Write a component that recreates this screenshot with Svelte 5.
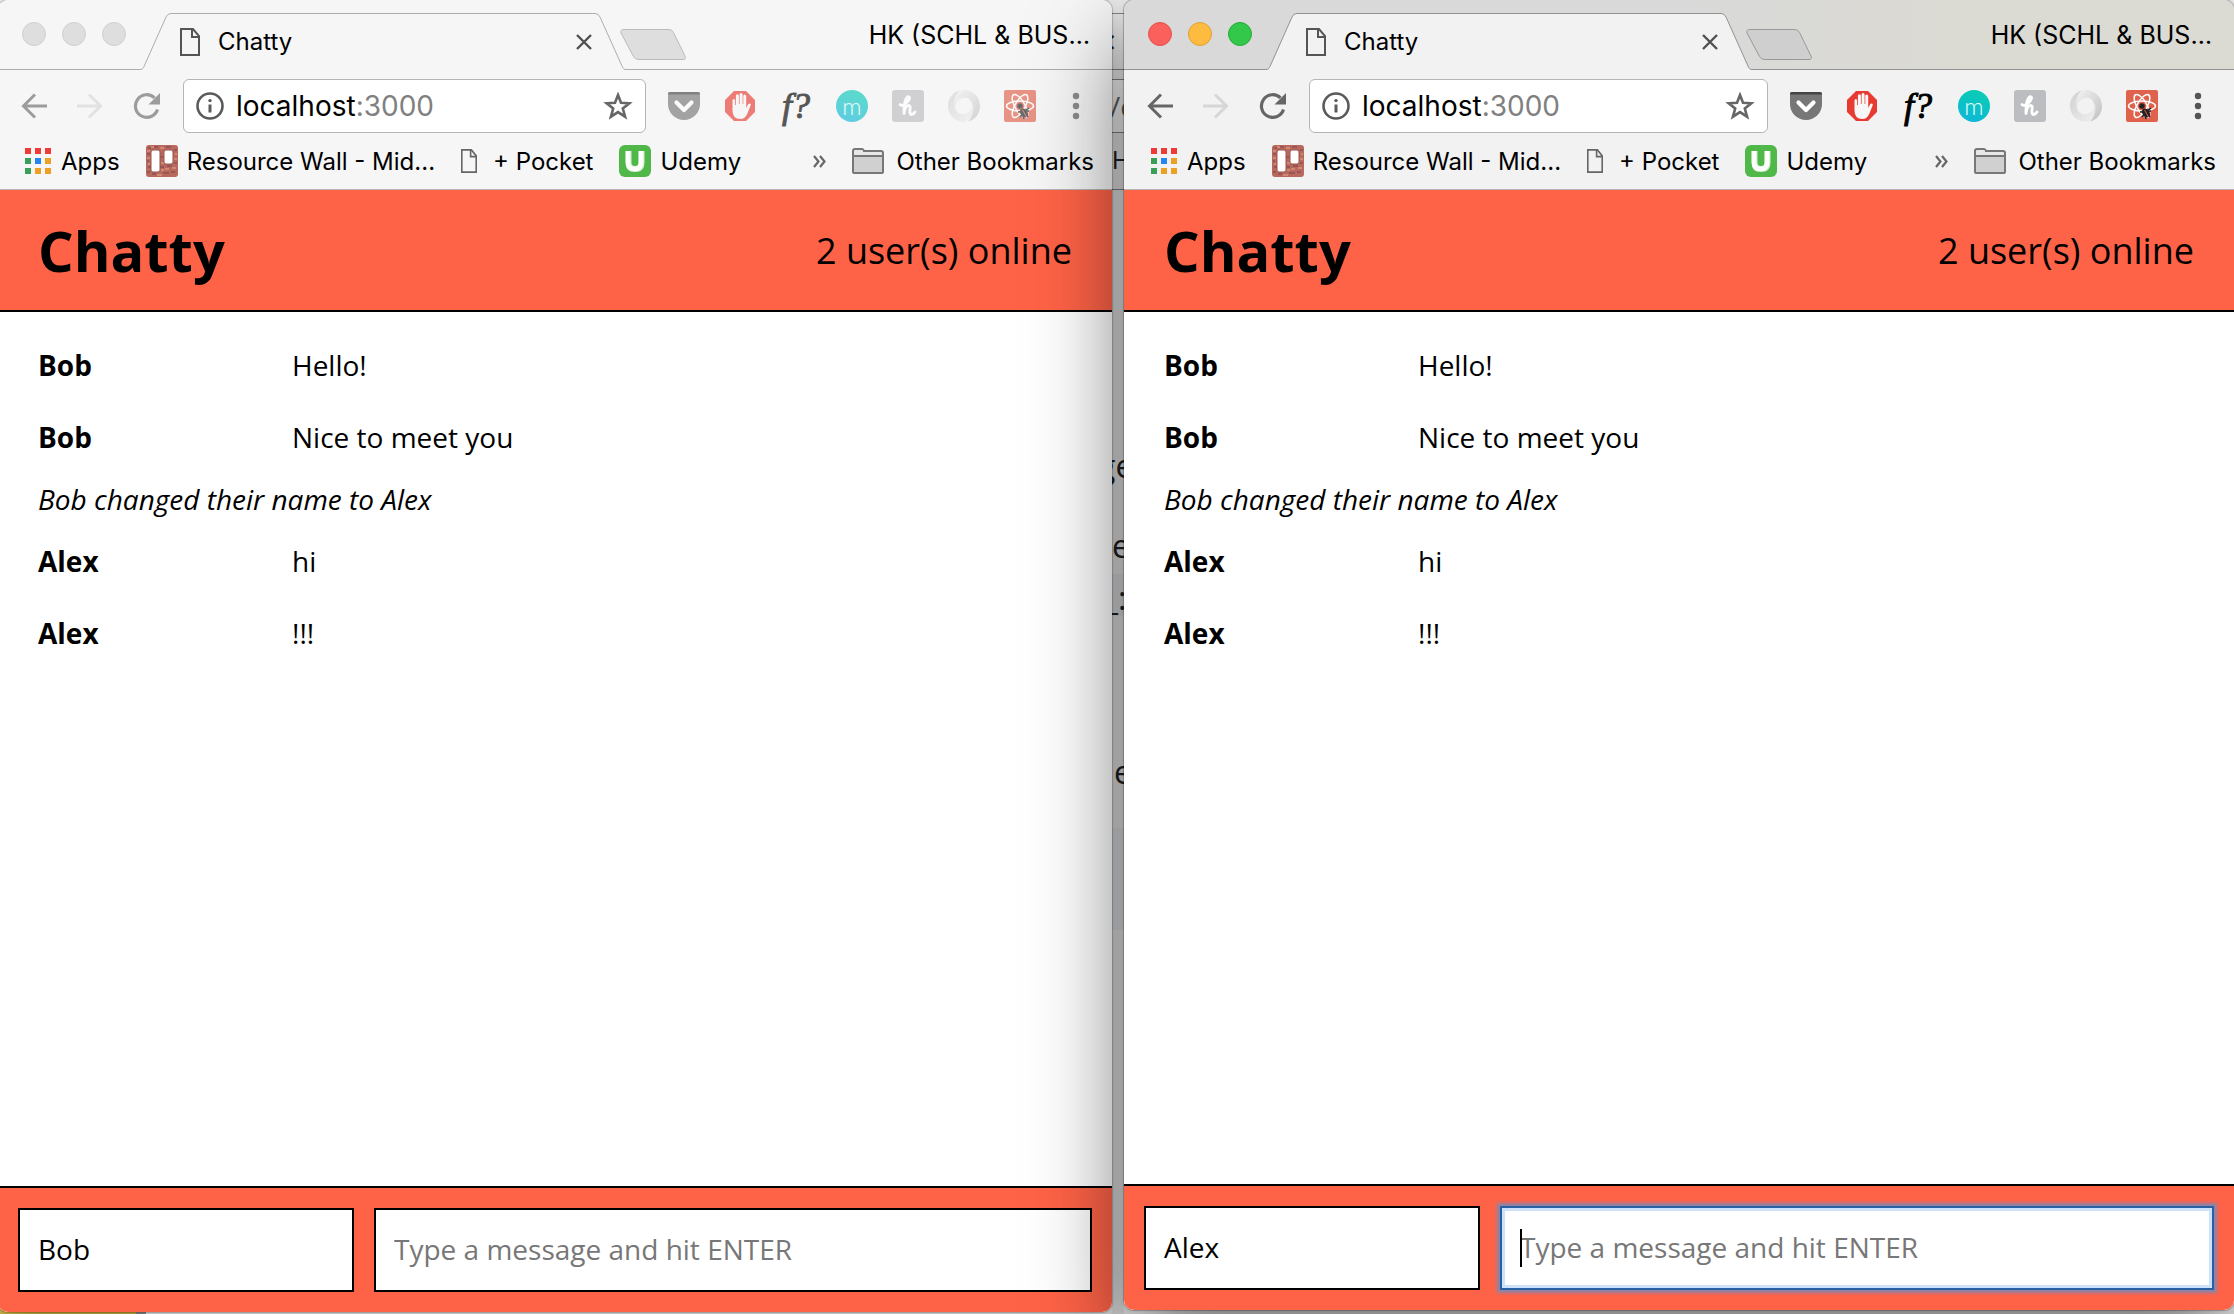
<script>
  const messages = [
    { name: 'Bob', text: 'Hello!' },
    { name: 'Bob', text: 'Nice to meet you' },
    { notice: 'Bob changed their name to Alex' },
    { name: 'Alex', text: 'hi' },
    { name: 'Alex', text: '!!!' }
  ];

  const windows = [
    { id: 'back', active: false, user: 'Bob' },
    { id: 'front', active: true, user: 'Alex' }
  ];
</script>

{#snippet pageIcon(w, h)}
  <svg width={w} height={h} viewBox="0 0 20 28" preserveAspectRatio="none" fill="none" stroke="currentColor" stroke-width="2">
    <path d="M1 1h12l6 7v19H1z" />
    <path d="M12 1v8h7" />
  </svg>
{/snippet}

{#snippet browser(win)}
  <section class="window {win.id}" aria-label="Chatty, {win.user}">
    <div class="strip">
      <div class="lights">
        <button class="light red" aria-label="Close window"></button>
        <button class="light yellow" aria-label="Minimise window"></button>
        <button class="light green" aria-label="Zoom window"></button>
      </div>
      <div class="tab">
        <svg class="tab-shape" width="488" height="57" viewBox="0 0 488 57" aria-hidden="true">
          <path class="tab-fill" d="M0 56.5c2 0 3-1 4-3L26 4q1.500-3.500 5-3.500H455q3.500 0 5 3.500l22 49c1 2.500 2 3.500 4 3.500V57H0z" />
          <path class="tab-line" d="M0 56.500c2 0 3-1 4-3L26 4q1.500-3.500 5-3.500H455q3.500 0 5 3.500l22 49c1 2.500 2 3.500 4 3.500" />
        </svg>
        <span class="tab-icon">{@render pageIcon(20, 28)}</span>
        <span class="tab-title">Chatty</span>
        <button class="tab-close" aria-label="Close tab">
          <svg width="16" height="16" viewBox="0 0 16 16" stroke="#505050" stroke-width="2.400"><path d="M1 1l14 14M15 1L1 15" /></svg>
        </button>
      </div>
      <button class="new-tab" aria-label="New tab">
        <svg width="66" height="33" viewBox="0 0 66 33">
          <path d="M4 .500H49q3 0 4.500 3L65 27q1.500 3.500-2 3.500H19q-4 0-5.500-3L1 4Q0 .500 4 .500z" />
        </svg>
      </button>
      <span class="profile">HK (SCHL &amp; BUS…</span>
    </div>

    <div class="toolbar">
      <div class="nav">
        <button class="nav-back" aria-label="Back">
          <svg width="26" height="26" viewBox="0 0 26 26" fill="none" stroke="currentColor" stroke-width="3"><path d="M26 13H2.500M14 1.500L2.500 13 14 24.500" /></svg>
        </button>
        <button class="nav-forward" aria-label="Forward">
          <svg width="26" height="26" viewBox="0 0 26 26" fill="none" stroke="currentColor" stroke-width="3"><path d="M0 13h23.500M12 1.500L23.500 13 12 24.500" /></svg>
        </button>
        <button class="nav-reload" aria-label="Reload">
          <svg width="28" height="28" viewBox="0 0 28 28"><path d="M24.500 17.500A11.300 11.300 0 1 1 21.500 5.800" fill="none" stroke="currentColor" stroke-width="3.200" /><path d="M27 1v11.500H15.500z" fill="currentColor" /></svg>
        </button>
      </div>
      <div class="omnibox">
        <svg width="28" height="28" viewBox="0 0 28 28" aria-hidden="true"><circle cx="14" cy="14" r="12.500" fill="none" stroke="#5a5a5a" stroke-width="2.600" /><path d="M14 12.500v8" stroke="#5a5a5a" stroke-width="3" /><circle cx="14" cy="8.600" r="1.700" fill="#5a5a5a" /></svg>
        <a class="url" href="#chat">localhost<span>:3000</span></a>
        <button class="star" aria-label="Bookmark this page">
          <svg width="30" height="30" viewBox="0 0 30 30" fill="none" stroke="#666" stroke-width="2.600"><path d="M15 4l3 7.800 8.300.500-6.500 5.200 2.300 8.200-7.100-4.600-7.100 4.600 2.300-8.200-6.500-5.200 8.300-.500z" /></svg>
        </button>
      </div>
      <div class="extensions">
        <button aria-label="Save to Pocket">
          <svg width="32" height="32" viewBox="0 0 32 32"><path d="M0 4q0-2 2-2h28q2 0 2 2v10a16 16 0 0 1-32 0z" fill="#777" /><path d="M0 4q0-2 2-2h28q2 0 2 2v.500H0z" fill="#444" /><path d="M8.500 12.500l7.500 7.500 7.500-7.500" fill="none" stroke="#fff" stroke-width="4.200" stroke-linecap="round" stroke-linejoin="round" /></svg>
        </button>
        <button aria-label="Content blocker">
          <svg width="32" height="32" viewBox="0 0 32 32"><path d="M10 1h12l9 9v12l-9 9H10l-9-9V10z" fill="#e93a32" /><path d="M8.500 10.500q0-1.500 1.300-1.500t1.300 1.500V15h.8V5.800q0-1.500 1.500-1.500t1.500 1.500V14h.7V4.600q0-1.600 1.500-1.600t1.500 1.600V14h.7V6q0-1.500 1.400-1.500T22.200 6v12l1.800-3.500q1.200-1.600 2.600-.6.500.5 0 1.600l-3.400 8.500Q21 29 16.500 29 8.500 29 8.500 20.500z" fill="#f7f7f7" /></svg>
        </button>
        <button class="ext-font" aria-label="WhatFont"><i>f?</i></button>
        <button class="ext-m" aria-label="Momentum">m</button>
        <button aria-label="Honey">
          <svg width="32" height="32" viewBox="0 0 32 32"><rect width="32" height="32" rx="3" fill="#bcbdc0" /><path d="M8 14.500q2 2 5-.500 5-4 4.500-6.500-1-2-3 .500-3 5-2.500 15.500 1-7 4-8 3-.500 2 4-.500 5 1.500 5 2 0 3.500-2.500" fill="none" stroke="#fff" stroke-width="2.800" stroke-linecap="round" stroke-linejoin="round" /></svg>
        </button>
        <button aria-label="JSON viewer">
          <svg width="32" height="32" viewBox="0 0 32 32">
            <defs>
              <linearGradient id="ring-a-{win.id}" x1="0" y1="0" x2="1" y2="1"><stop offset="0" stop-color="#f2f2f2" /><stop offset="1" stop-color="#c0c0c0" /></linearGradient>
              <linearGradient id="ring-b-{win.id}" x1="1" y1="1" x2="0" y2="0"><stop offset="0" stop-color="#f0f0f0" /><stop offset="1" stop-color="#d0d0d0" /></linearGradient>
            </defs>
            <path d="M15 0c10 0 17 7 17 16 0 8-5 14-12 15.500C27 26 27 6 15.500 8 12 8.500 7 11 7 19 5 10 9 3 15 0z" fill="url(#ring-a-{win.id})" />
            <path d="M17 32C7 32 0 25 0 16 0 8 5 2 12 .5 3 8 5 26 16.500 24c4-.5 8-4 8.500-11C27 22 23 29 17 32z" fill="url(#ring-b-{win.id})" />
          </svg>
        </button>
        <button aria-label="React developer tools">
          <svg width="32" height="32" viewBox="0 0 32 32"><rect width="32" height="32" rx="2" fill="#e0614c" /><g fill="none" stroke="#fff" stroke-width="1.500"><ellipse cx="16" cy="16" rx="13.500" ry="5" /><ellipse cx="16" cy="16" rx="13" ry="5" transform="rotate(60 16 16)" /><ellipse cx="16" cy="16" rx="13" ry="5" transform="rotate(120 16 16)" /></g><circle cx="16" cy="16" r="2.800" fill="#222" /><ellipse cx="20" cy="23" rx="3.600" ry="5" transform="rotate(-35 20 23)" fill="#222" /><path d="M14 22l11-1M16 27l7-8M20 29l-2-9M25 18l-5 4M24 27l-4-5" stroke="#222" stroke-width="1.500" /><path d="M18.500 20l4 7" stroke="#e0614c" stroke-width="1" /></svg>
        </button>
        <button aria-label="Menu">
          <svg width="32" height="32" viewBox="0 0 32 32" fill="#555"><circle cx="16" cy="6" r="3.200" /><circle cx="16" cy="16" r="3.200" /><circle cx="16" cy="26" r="3.200" /></svg>
        </button>
      </div>
    </div>

    <nav class="bookmarks" aria-label="Bookmarks">
      <a href="#apps" class="apps">
        <svg width="26" height="26" viewBox="0 0 26 26"><path d="M0 0h6v6H0zM10 0h6v6h-6zM20 0h6v6h-6z" fill="#f03a36" /><path d="M0 10h6v6H0zM0 20h6v6H0z" fill="#3a9f58" /><path d="M10 10h6v6h-6z" fill="#2486f0" /><path d="M20 10h6v6h-6zM10 20h6v6h-6zM20 20h6v6h-6z" fill="#eea022" /></svg>
        Apps
      </a>
      <a href="#resource-wall">
        <svg width="32" height="32" viewBox="0 0 32 32"><rect width="32" height="32" rx="3" fill="#b9695b" /><path d="M2 3h3M8 2h4M20 2h5M28 5h3M1 9h3M1 16h2M2 22h3M14 22h4M21 21h5M28 18h3M17 28h6M6 29h4M25 27h4M14 12h3M1 27h3" stroke="#8b4f55" stroke-width="1.500" /><path d="M5 2h3M14 3h4M1 6h3M29 9h2M1 13h3M28 14h3M15 18h3M19 24h4M26 23h4M11 30h5M15 25h3M2 19h2" stroke="#d99480" stroke-width="1.500" /><rect x="5" y="5" width="9" height="22" rx="2" fill="#fff" stroke="#95544f" /><rect x="18" y="5" width="9" height="14" rx="2" fill="#fff" stroke="#95544f" /></svg>
        Resource Wall - Mid...
      </a>
      <a href="#pocket" class="page-link">{@render pageIcon(16, 24)} + Pocket</a>
      <a href="#udemy">
        <svg width="32" height="32" viewBox="0 0 32 32"><rect width="32" height="32" rx="6" fill="#50b848" /><path d="M9.500 6v11.500q0 6.500 6.500 6.500t6.500-6.500V6" fill="none" stroke="#d5f0d2" stroke-width="6" /><path d="M9 6v11.500q0 6.500 6.500 6.500T22 17.500V6" fill="none" stroke="#fff" stroke-width="4.500" /></svg>
        Udemy
      </a>
      <button class="more" aria-label="More bookmarks">
        <svg width="13" height="13" viewBox="0 0 13 13" fill="none" stroke="#666" stroke-width="2.200"><path d="M1 1l4.500 5.500L1 12M7 1l4.500 5.500L7 12" /></svg>
      </button>
      <a href="#other" class="other">
        <svg width="32" height="26" viewBox="0 0 32 26"><path d="M1 24V3q0-2 2-2h7q1.500 0 2 2h17q2 0 2 2v19q0 1-1 1H2q-1 0-1-1z" fill="#e8e8e8" stroke="#777" stroke-width="2" /><path d="M2 9h28v15H2z" fill="#d0d0d0" /><path d="M1 8h30" stroke="#777" stroke-width="2" /></svg>
        Other Bookmarks
      </a>
    </nav>

    <div class="app">
      <header>
        <h1>Chatty</h1>
        <span>2 user(s) online</span>
      </header>
      <main>
        {#each messages as message}
          {#if message.notice}
            <p class="notice">{message.notice}</p>
          {:else}
            <p class="message"><b>{message.name}</b><span>{message.text}</span></p>
          {/if}
        {/each}
      </main>
      <footer>
        <input class="username" aria-label="Your name" value={win.user} />
        <div class="compose" class:focused={win.active}>
          <input aria-label="Message" placeholder="Type a message and hit ENTER" />
          {#if win.active}<span class="caret"></span>{/if}
        </div>
      </footer>
    </div>
  </section>
{/snippet}

<div class="desktop">
  {@render browser(windows[0])}
  <div class="behind" aria-hidden="true">
    <div class="rear-tabs"></div>
    <div class="rear-toolbar"></div>
    <div class="rear-marks"></div>
    <span class="frag close">×</span>
    <span class="frag path">/c</span>
    <span class="frag mark">H</span>
    <span class="frag word-one">ge</span>
    <span class="frag word-two">e</span>
    <span class="frag code">_:</span>
    <span class="frag word-three">e</span>
    <div class="frag block"></div>
  </div>
  {@render browser(windows[1])}
</div>

<style>
  :global(body) {
    margin: 0;
    background: #fff;
  }

  .desktop {
    display: grid;
    grid-template-columns: minmax(0, 1114fr) 12px minmax(0, 1110fr);
    min-height: 100vh;
    margin-left: -2px;
    overflow: hidden;
    background: linear-gradient(90deg, #d8c04a 138px, #999 138px 148px, #fff 148px) bottom / 100% 12px no-repeat #f2f2f2;
    font-family: Inter, "Liberation Sans", sans-serif;
    font-size: 24px;
    color: #000;
  }

  button {
    display: flex;
    align-items: center;
    justify-content: center;
    margin: 0;
    padding: 0;
    border: 0;
    background: none;
    color: inherit;
    font: inherit;
  }

  a {
    color: inherit;
    text-decoration: none;
  }

  svg {
    display: block;
    flex: none;
  }

  .window {
    position: relative;
    display: flex;
    flex-direction: column;
    min-width: 0;
    border-radius: 10px;
    background: #f2f2f2;
  }

  .back {
    z-index: 1;
    margin-bottom: 2px;
    background: #f6f6f6;
    box-shadow: 0 0 1px 1px rgba(0, 0, 0, 0.2), 0 16px 40px rgba(0, 0, 0, 0.3);
  }

  .front {
    z-index: 2;
    margin-bottom: 4px;
    box-shadow: 0 0 1px 1px rgba(0, 0, 0, 0.25), 0 40px 90px rgba(0, 0, 0, 0.56);
  }

  .strip {
    display: flex;
    height: 69px;
    border-bottom: 1px solid #929292;
    border-radius: 10px 10px 0 0;
    background: linear-gradient(90deg, #d9d9d9 50%, #dbdad3 75%);
  }

  .back .strip {
    border-color: #adadad;
    background: #f6f6f6;
  }

  .lights {
    display: flex;
    flex: none;
    gap: 16px;
    width: 118px;
    padding: 22px 0 0 24px;
  }

  .light {
    box-sizing: border-box;
    width: 24px;
    height: 24px;
    border: 1px solid #d0d0d0;
    border-radius: 50%;
    background: #dedede;
  }

  .front .red {
    border-color: #e2504a;
    background: #fc605c;
  }

  .front .yellow {
    border-color: #dfa036;
    background: #fdbc40;
  }

  .front .green {
    border-color: #25ab36;
    background: #34c84a;
  }

  .tab {
    position: relative;
    display: flex;
    flex: none;
    align-items: center;
    box-sizing: border-box;
    width: 488px;
    height: 57px;
    margin-top: 13px;
    padding: 0 36px 0 40px;
  }

  .tab-shape {
    position: absolute;
    inset: 0;
  }

  .tab-fill {
    fill: #f2f2f2;
  }

  .tab-line {
    fill: none;
    stroke: #929292;
  }

  .back .tab-fill {
    fill: #f6f6f6;
  }

  .back .tab-line {
    stroke: #adadad;
  }

  .tab-icon,
  .tab-title,
  .tab-close {
    position: relative;
  }

  .tab-icon {
    color: #555;
  }

  .tab-title {
    flex: 1;
    padding-left: 18px;
  }

  .new-tab {
    position: relative;
    flex: none;
    align-self: flex-start;
    margin: 29px 0 0 -8px;
  }

  .new-tab path {
    fill: #cfcfcf;
    stroke: #999;
  }

  .back .new-tab path {
    fill: #dedede;
    stroke: #bbb;
  }

  .profile {
    margin-left: auto;
    padding: 20px 22px 0 0;
    font-size: 25px;
    line-height: 30px;
    white-space: nowrap;
  }

  .toolbar {
    display: flex;
    align-items: center;
    gap: 22px;
    padding: 9px 20px 0 23px;
  }

  .nav {
    display: flex;
    align-items: center;
    gap: 30px;
    color: #666;
  }

  .nav-forward {
    color: #d6d6d6;
  }

  .back .nav {
    color: #9c9c9c;
  }

  .back .nav-forward {
    color: #e2e2e2;
  }

  .omnibox {
    display: flex;
    flex: 1;
    align-items: center;
    box-sizing: border-box;
    min-width: 0;
    height: 54px;
    padding: 0 12px;
    border: 1px solid #b5b5b5;
    border-radius: 6px;
    background: #fff;
  }

  .url {
    flex: 1;
    padding-left: 12px;
    font-size: 28px;
  }

  .url span {
    color: #808080;
  }

  .extensions {
    display: flex;
    gap: 24px;
  }

  .extensions button {
    width: 32px;
    height: 32px;
  }

  .back .extensions {
    opacity: 0.65;
  }

  .ext-font {
    font-family: "Liberation Serif", serif;
    font-size: 36px;
    -webkit-text-stroke: 1px currentColor;
  }

  .extensions .ext-m {
    border-radius: 50%;
    background: linear-gradient(20deg, #10b5dc, #08cfae);
    color: #e8ffff;
    font-family: Lato, sans-serif;
    font-size: 24px;
    font-weight: 300;
    line-height: 28px;
  }

  .bookmarks {
    display: flex;
    align-items: center;
    gap: 26px;
    height: 56px;
    padding: 0 18px 0 27px;
    border-bottom: 1px solid #b5b5b5;
    white-space: nowrap;
  }

  .bookmarks a {
    display: flex;
    align-items: center;
    gap: 9px;
  }

  .bookmarks .apps {
    gap: 10px;
  }

  .bookmarks .page-link {
    gap: 16px;
  }

  .bookmarks .other {
    gap: 12px;
  }

  .page-link :global(svg) {
    color: #666;
  }

  .more {
    margin-left: auto;
  }

  .app {
    display: flex;
    flex: 1;
    flex-direction: column;
    border-radius: 0 0 10px 10px;
    background: #fff;
    font-family: "Open Sans", "Noto Sans", sans-serif;
    font-size: 28px;
    line-height: 38px;
  }

  header {
    display: flex;
    align-items: center;
    justify-content: space-between;
    height: 120px;
    padding: 0 40px;
    border-bottom: 2px solid #000;
    background: #ff6347;
    font-size: 36px;
    line-height: 49px;
  }

  h1 {
    margin: 0;
    font-size: 56px;
    line-height: 76px;
  }

  main {
    flex: 1;
    padding: 17px 40px;
  }

  p {
    margin: 0;
  }

  .message {
    display: flex;
    padding: 17px 0;
  }

  .message b {
    flex: none;
    width: 254px;
  }

  .notice {
    padding: 7px 0;
    font-style: italic;
  }

  footer {
    display: flex;
    gap: 20px;
    padding: 20px;
    border-top: 2px solid #000;
    border-radius: 0 0 10px 10px;
    background: #ff6347;
  }

  input {
    box-sizing: border-box;
    width: 100%;
    height: 84px;
    margin: 0;
    padding: 0 18px 2px;
    border: 2px solid #000;
    border-radius: 0;
    outline: 0;
    background: #fff;
    color: #000;
    font: inherit;
  }

  input::placeholder {
    color: #777;
    opacity: 1;
  }

  .username {
    flex: none;
    width: 336px;
  }

  .compose {
    position: relative;
    flex: 1;
  }

  .focused input {
    border-color: #2860a2;
    box-shadow: inset 0 0 0 3px #cce2fa, 0 0 3px 3px rgba(75, 150, 225, 0.65);
  }

  .caret {
    position: absolute;
    top: 23px;
    left: 20px;
    width: 2px;
    height: 38px;
    background: #000;
  }

  .behind {
    position: relative;
    overflow: hidden;
    background: #f2f2f2;
    color: #222;
    font-family: "Open Sans", sans-serif;
    font-size: 32px;
    line-height: 40px;
  }

  .rear-tabs,
  .rear-toolbar,
  .rear-marks {
    box-sizing: border-box;
    border-bottom: 1px solid #888;
  }

  .rear-tabs {
    height: 70px;
    background: linear-gradient(#f2f2f2 13px, #888 13px 14px, #f2f2f2 14px);
  }

  .rear-toolbar {
    height: 63px;
    background: linear-gradient(#f2f2f2 9px, #888 9px 10px, #fff 10px);
  }

  .rear-marks {
    height: 57px;
  }

  .frag {
    position: absolute;
    left: 0;
    white-space: nowrap;
  }

  .close {
    top: 22px;
    left: -14px;
  }

  .path {
    top: 86px;
    left: -2px;
    color: #666;
    font-size: 28px;
  }

  .mark {
    top: 141px;
    font-family: Inter, sans-serif;
    font-size: 24px;
  }

  .word-one {
    top: 446px;
    left: -14px;
  }

  .word-two {
    top: 526px;
  }

  .code {
    top: 574px;
    left: -8px;
    width: 30px;
    height: 42px;
    background: #e6e8ea;
    line-height: 48px;
  }

  .word-three {
    top: 752px;
    left: 2px;
  }

  .block {
    top: 828px;
    width: 12px;
    height: 102px;
    background: #e8eaee;
  }
</style>
